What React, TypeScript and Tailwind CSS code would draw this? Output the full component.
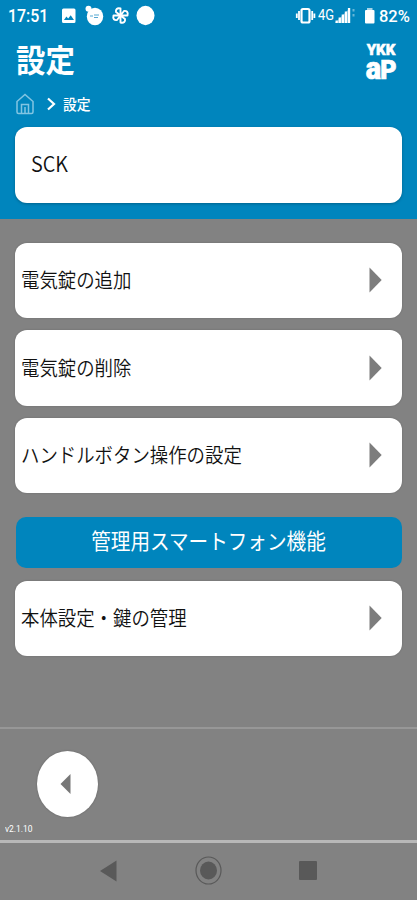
import React from "react";

const jp = "font-['Noto_Sans_CJK_JP',sans-serif] whitespace-nowrap";

function StatusIcons() {
  return (
    <svg className="h-8 w-[110px]" viewBox="0 0 110 32" fill="white">
      <path fillRule="evenodd" d="M4.500 8.500h10.500q1.500 0 1.500 1.500v11.500q0 1.500-1.500 1.500h-10.500q-1.500 0-1.500-1.500v-11.500q0-1.500 1.500-1.500zM5 20h10l-3.300-4.700-2.500 3.200-1.800-2z" />
      <circle cx="29.500" cy="8.800" r="3" />
      <ellipse cx="36" cy="16.500" rx="8.200" ry="8.800" />
      <path d="M31 16h3M35 15h5M35 17.500h4" stroke="#55a7d2" strokeWidth="1.100" fill="none" />
      <g fill="none" stroke="white" strokeWidth="1.900" strokeLinejoin="round">
        <path d="M61.500 15.500V8.500c-3.500-1-5 1-4.500 3.500L61.500 15.500zM61.500 15.500h7c1-3.500-1-5-3.500-4.500L61.500 15.500zM61.500 15.500v7c3.500 1 5-1 4.500-3.500L61.500 15.500zM61.500 15.500h-7c-1 3.500 1 5 3.500 4.500L61.500 15.500z" />
      </g>
      <ellipse cx="86.500" cy="15.500" rx="9" ry="9.700" />
    </svg>
  );
}

function Logo() {
  return (
    <div className="flex h-[36px] w-[34px] flex-col items-center whitespace-nowrap font-['Roboto',sans-serif] font-black">
      <span className="text-[15px] leading-[13px] [-webkit-text-stroke:0.500px_white]">YKK</span>
      <span className="mt-[1px] flex items-baseline leading-[20px] [-webkit-text-stroke:0.700px_white]">
        <span className="scale-x-[0.900] text-[32px] leading-[20px]">a</span>
        <span className="-ml-[2px] text-[25px] leading-[20px]">P</span>
      </span>
    </div>
  );
}

function Card({ label, className }: { label: string; className: string }) {
  return (
    <button className={`flex h-[75.500px] w-[387px] items-center justify-between rounded-[12px] bg-white pl-[6px] pr-[20px] text-left shadow-[0_0_2px_rgba(0,0,0,0.2)] ${className}`}>
      <span className={`${jp} origin-left scale-x-[0.920] text-[20px] font-[350] leading-none text-[#111]`}>{label}</span>
      <svg className="h-[26px] w-[13px] shrink-0" viewBox="0 0 13 26">
        <path d="M0.500 0.500L12.700 13 0.500 25.500z" fill="#7d7d7d" />
      </svg>
    </button>
  );
}

export default function App() {
  return (
    <div className="flex h-[900px] w-[417px] flex-col overflow-hidden bg-[#828282]">
      <header className="h-[218.500px] shrink-0 bg-[#0085bd] px-[15px] text-white">
        <div className="-mx-[15px] flex h-8 items-center font-['Roboto',sans-serif] font-medium">
          <span className="ml-[8px] w-[51px] text-[17.500px] leading-8"><span className="inline-block origin-left scale-x-[0.910]">17:51</span></span>
          <StatusIcons />
          <svg className="ml-[126px] h-8 w-[22px]" viewBox="0 0 22 32">
            <rect x="6.500" y="9" width="8" height="13.500" rx="1.500" fill="none" stroke="white" strokeWidth="2.200" />
            <path d="M4 11v9M1.800 13.500v4.500M17.200 11v9M19.400 13.500v4.500" stroke="white" strokeWidth="1.800" />
          </svg>
          <span className="ml-[1px] w-[17px] text-[14.500px] font-normal leading-8"><span className="inline-block origin-left scale-x-[0.890]">4G</span></span>
          <svg className="h-8 w-[22px]" viewBox="0 0 22 32" fill="white">
            <path d="M0.500 20.500h2.300V23H0.500zM3.600 17.500h2.300V23H3.600zM6.700 14.500H9V23H6.700zM9.800 11.500h2.300V23H9.800zM12.900 8h2.300v15h-2.300z" />
            <path d="M0 23L15 8v15z" opacity="0.450" />
            <path d="M17.500 9h2v2.500h-2zM17.500 14h2v2.500h-2z" opacity="0.400" />
          </svg>
          <svg className="ml-[5px] h-8 w-[16px]" viewBox="0 0 16 32" fill="white">
            <rect x="3" y="10" width="9.500" height="13.500" rx="1" />
            <rect x="5" y="8" width="5.500" height="2" opacity="0.650" />
          </svg>
          <span className="ml-[1px] text-[17px] leading-8"><span className="inline-block origin-left scale-x-[0.970]">82%</span></span>
        </div>
        <div className="flex h-[57px] items-start justify-between">
          <h1 className={`${jp} ml-[1px] mt-[10px] origin-left scale-x-[0.920] text-[32px] font-bold leading-[32px]`}>設定</h1>
          <div className="mr-[4px] mt-[12px]"><Logo /></div>
        </div>
        <nav className="flex h-[30px] items-center">
          <svg className="ml-[1px] h-[22px] w-[18px]" viewBox="0 0 18 22" fill="none" stroke="#82c5e2" strokeWidth="1.500">
            <path d="M1 8.500L9 1.500l8 7V19q0 1.500-1.500 1.500h-13Q1 20.500 1 19zM5.500 20v-8.500h7V20M9 14v6" />
          </svg>
          <svg className="ml-[13px] h-[14px] w-[9px]" viewBox="0 0 9 14" fill="none" stroke="white" strokeWidth="2.200">
            <path d="M1 1.500l6 5.500-6 5.500" />
          </svg>
          <span className={`${jp} mb-[2px] ml-[7px] origin-left scale-x-[0.920] text-[15px] font-medium leading-none`}>設定</span>
        </nav>
        <div className="mt-[7.500px] flex h-[76.500px] w-[387px] items-center rounded-[12px] bg-white pb-[5px] pl-[16px] shadow-[0_1px_3px_rgba(0,0,0,0.25)]">
          <span className={`${jp} origin-left scale-x-[0.900] text-[22px] font-[350] leading-none text-[#111]`}>SCK</span>
        </div>
      </header>
      <main className="flex h-[508px] shrink-0 flex-col px-[15px] pt-[24px]">
        <Card label="電気錠の追加" className="" />
        <Card label="電気錠の削除" className="mt-[12px]" />
        <Card label="ハンドルボタン操作の設定" className="mt-[12px]" />
        <div className="ml-[1px] mt-[23.500px] flex h-[51px] w-[385.500px] items-center justify-center rounded-[10px] bg-[#0085bd] pb-[4px]">
          <span className={`${jp} scale-x-[0.920] text-[21.300px] font-normal leading-none text-white`}>管理用スマートフォン機能</span>
        </div>
        <Card label="本体設定・鍵の管理" className="mt-[13px]" />
      </main>
      <footer className="flex h-[113.500px] shrink-0 flex-col border-t-2 border-[#979797] pt-[22px]">
        <button className="ml-[36.500px] flex h-[66px] w-[61px] shrink-0 items-center justify-center rounded-[50%] bg-white shadow-[0_0_2px_rgba(0,0,0,0.25)]">
          <svg className="-ml-[3px] h-[20px] w-[11px]" viewBox="0 0 11 20"><path d="M10.500 0v20L0.500 10z" fill="#777" /></svg>
        </button>
        <span className="ml-[5px] mt-[5px] font-['Roboto',sans-serif] text-[9px] leading-[14px] text-white"><span className="inline-block origin-left scale-x-[0.940]">v2.1.10</span></span>
      </footer>
      <div className="flex h-[60px] shrink-0 border-t-[3px] border-[#b8b8b8]">
        <svg className="h-[57px] w-[417px]" viewBox="0 0 417 57" fill="#595959">
          <path d="M116.500 17.500v21L100 28z" />
          <ellipse cx="208.500" cy="27.500" rx="12.500" ry="13.500" fill="none" stroke="#595959" strokeWidth="1.200" />
          <ellipse cx="208.500" cy="27.500" rx="8.500" ry="9" />
          <rect x="299" y="18" width="18" height="19" rx="1" />
        </svg>
      </div>
    </div>
  );
}
